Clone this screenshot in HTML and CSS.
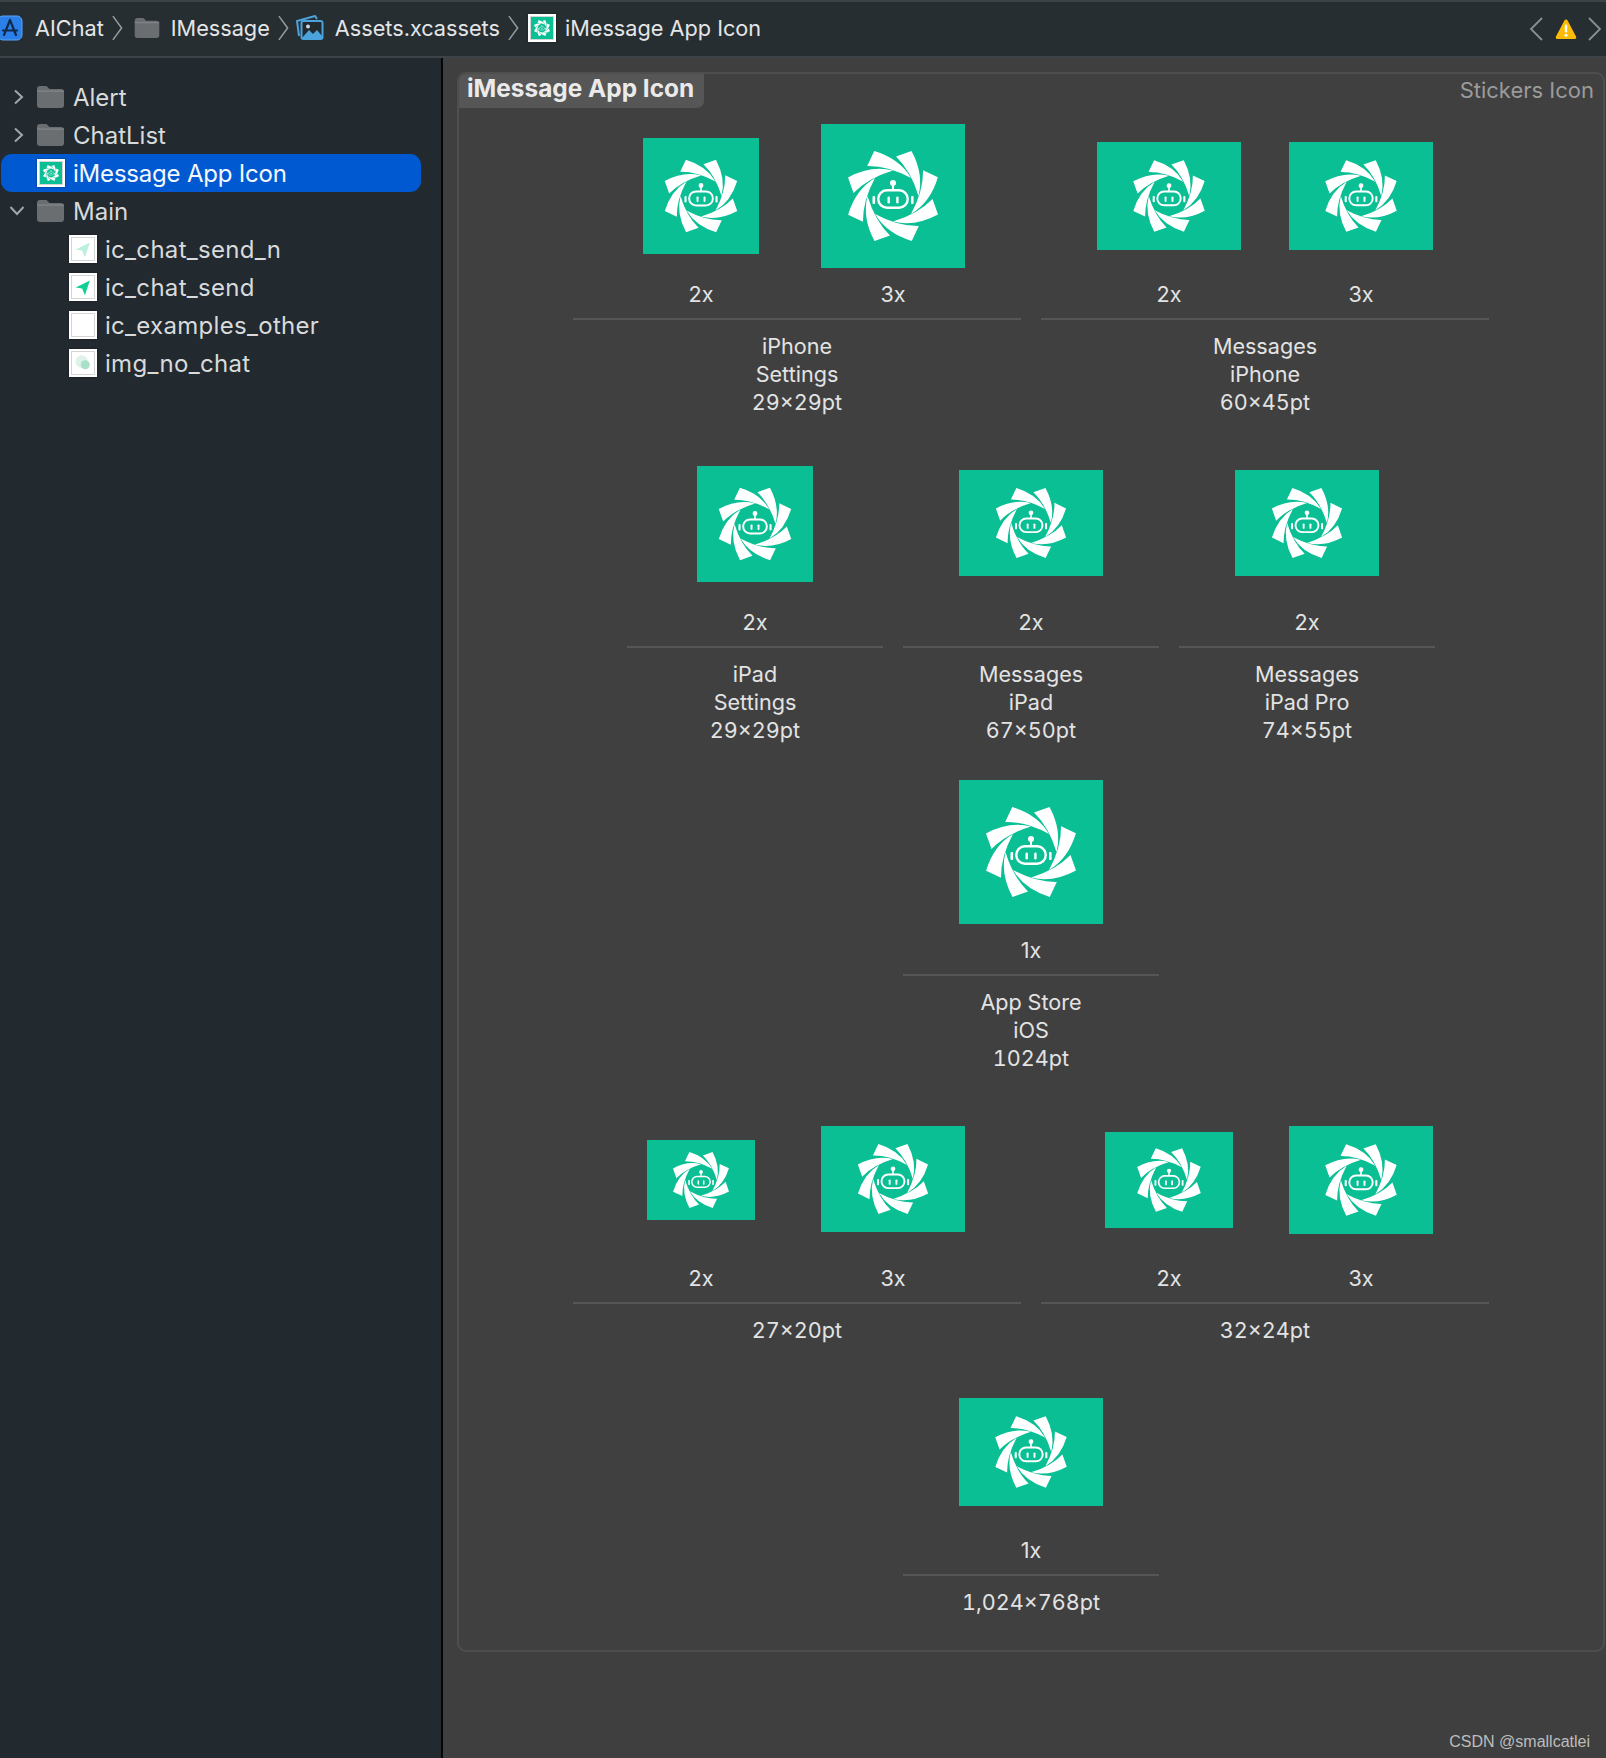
FILE: index.html
```html
<!DOCTYPE html>
<html lang="en">
<head>
<meta charset="utf-8">
<title>iMessage App Icon</title>
<link rel="stylesheet" href="styles.css">
</head>
<body>
<svg class="defs" aria-hidden="true">
  <symbol id="logo" viewBox="-72 -72 144 144">
    <g fill="#fff">
      <path d="M3 -39.5 L18.5 -45 Q31 -22 25.5 0 Q18 -25 3 -39.5Z"/>
      <path transform="rotate(45)" d="M3 -39.5 L18.5 -45 Q31 -22 25.5 0 Q18 -25 3 -39.5Z"/>
      <path transform="rotate(90)" d="M3 -39.5 L18.5 -45 Q31 -22 25.5 0 Q18 -25 3 -39.5Z"/>
      <path transform="rotate(135)" d="M3 -39.5 L18.5 -45 Q31 -22 25.5 0 Q18 -25 3 -39.5Z"/>
      <path transform="rotate(180)" d="M3 -39.5 L18.5 -45 Q31 -22 25.5 0 Q18 -25 3 -39.5Z"/>
      <path transform="rotate(225)" d="M3 -39.5 L18.5 -45 Q31 -22 25.5 0 Q18 -25 3 -39.5Z"/>
      <path transform="rotate(270)" d="M3 -39.5 L18.5 -45 Q31 -22 25.5 0 Q18 -25 3 -39.5Z"/>
      <path transform="rotate(315)" d="M3 -39.5 L18.5 -45 Q31 -22 25.5 0 Q18 -25 3 -39.5Z"/>
      <circle cx="0" cy="-13" r="3"/>
      <rect x="-1" y="-12" width="2" height="6"/>
      <rect x="-20.5" y="0" width="2.6" height="8" rx="1"/>
      <rect x="18" y="0" width="2.6" height="8" rx="1"/>
      <rect x="-5.5" y="0.5" width="2.4" height="7" rx="1.2"/>
      <rect x="3.2" y="0.5" width="2.4" height="7" rx="1.2"/>
    </g>
    <rect x="-14.7" y="-5.7" width="29.4" height="17.4" rx="8.5" fill="none" stroke="#fff" stroke-width="2.4"/>
  </symbol>
  <symbol id="folder" viewBox="0 0 27 22">
    <path d="M0 3a3 3 0 0 1 3-3h6.5l3 3H24a3 3 0 0 1 3 3v13a3 3 0 0 1-3 3H3a3 3 0 0 1-3-3Z" fill="#6b6e70"/>
    <rect x="0" y="4.5" width="27" height="1.2" fill="#84878a"/>
  </symbol>
  <symbol id="send" viewBox="0 0 24 24">
    <path d="M21 2 L1 12 L10 13.5 L14 23Z"/>
  </symbol>
</svg>

<header class="topbar">
  <nav class="crumbs">
    <svg class="app-icon" viewBox="0 0 26 26"><rect x="1" y="1" width="24" height="24" rx="5" fill="#2b7fe8" stroke="#58a5f5"/><path d="M13 5 L7 20 M13 5 L19 20 M6 15.5 H20" stroke="#10284a" stroke-width="2.2" fill="none" stroke-linecap="round"/></svg>
    <span class="crumb first">AIChat</span>
    <svg class="sep" viewBox="0 0 12 28"><path d="M1 1 L10.5 14 L1 27" fill="none" stroke="#9a9da0" stroke-width="1.6"/></svg>
    <svg class="crumb-folder"><use href="#folder"/></svg>
    <span class="crumb">IMessage</span>
    <svg class="sep" viewBox="0 0 12 28"><path d="M1 1 L10.5 14 L1 27" fill="none" stroke="#9a9da0" stroke-width="1.6"/></svg>
    <svg class="assets" viewBox="0 0 28 26"><path d="M3 21 L1 6 L19 1 L21 4" fill="none" stroke="#4aa3dc" stroke-width="2"/><rect x="5.5" y="6" width="21" height="18" rx="2" fill="#22292f" stroke="#4aa3dc" stroke-width="2"/><path d="M6 23 L13 15 L17 19 L21 15 L26 21 V24 H6Z" fill="#4aa3dc"/><circle cx="12" cy="11.5" r="2" fill="#cfd8de"/></svg>
    <span class="crumb">Assets.xcassets</span>
    <svg class="sep" viewBox="0 0 12 28"><path d="M1 1 L10.5 14 L1 27" fill="none" stroke="#9a9da0" stroke-width="1.6"/></svg>
    <span class="thumb crumb-thumb"><span class="thumb-in green"><svg class="mini"><use href="#logo"/></svg></span></span>
    <span class="crumb last">iMessage App Icon</span>
  </nav>
  <div class="nav-right">
    <svg class="arrow" viewBox="0 0 14 24"><path d="M13 1 L2 12 L13 23" fill="none" stroke="#8b8f92" stroke-width="1.8"/></svg>
    <svg class="warn" viewBox="0 0 22 22"><path d="M11 1.5 Q12 1.5 12.6 2.6 L21 18.5 Q21.8 21 19.5 21 H2.5 Q0.2 21 1 18.5 L9.4 2.6 Q10 1.5 11 1.5Z" fill="#fdbb05"/><rect x="9.8" y="6.5" width="2.4" height="8" rx="1.2" fill="#fff"/><circle cx="11" cy="17.3" r="1.5" fill="#fff"/></svg>
    <svg class="arrow" viewBox="0 0 14 24"><path d="M1 1 L12 12 L1 23" fill="none" stroke="#8b8f92" stroke-width="1.8"/></svg>
  </div>
</header>

<div class="body">
  <aside class="sidebar">
    <div class="row"><svg class="disc" viewBox="0 0 12 16"><path d="M2 1.5 L9 8 L2 14.5" fill="none" stroke="#a4a7a9" stroke-width="2"/></svg><svg class="folder"><use href="#folder"/></svg><span>Alert</span></div>
    <div class="row"><svg class="disc" viewBox="0 0 12 16"><path d="M2 1.5 L9 8 L2 14.5" fill="none" stroke="#a4a7a9" stroke-width="2"/></svg><svg class="folder"><use href="#folder"/></svg><span>ChatList</span></div>
    <div class="row selected"><span class="thumb"><span class="thumb-in green"><svg class="mini"><use href="#logo"/></svg></span></span><span>iMessage App Icon</span></div>
    <div class="row"><svg class="disc down" viewBox="0 0 16 12"><path d="M1.5 2 L8 9 L14.5 2" fill="none" stroke="#a4a7a9" stroke-width="2"/></svg><svg class="folder"><use href="#folder"/></svg><span>Main</span></div>
    <div class="row child"><span class="thumb"><span class="thumb-in"><svg class="send pale"><use href="#send"/></svg></span></span><span>ic_chat_send_n</span></div>
    <div class="row child"><span class="thumb"><span class="thumb-in"><svg class="send"><use href="#send"/></svg></span></span><span>ic_chat_send</span></div>
    <div class="row child"><span class="thumb"><span class="thumb-in"></span></span><span>ic_examples_other</span></div>
    <div class="row child"><span class="thumb"><span class="thumb-in"><svg class="chat" viewBox="0 0 20 20"><circle cx="8.5" cy="8.5" r="7" fill="#dff3ea"/><circle cx="12.5" cy="12" r="5" fill="#a8e0c8"/></svg></span></span><span>img_no_chat</span></div>
  </aside>

  <main class="main">
    <section class="panel">
      <div class="panel-head">
        <h1 class="tab">iMessage App Icon</h1>
        <span class="kind">Stickers Icon</span>
      </div>

      <div class="set-row">
        <div class="group g448">
          <div class="slots">
            <div class="slot"><div class="img-box"><div class="tile s116"><svg class="logo"><use href="#logo"/></svg></div></div><div class="scale">2x</div></div>
            <div class="slot"><div class="img-box"><div class="tile s144"><svg class="logo"><use href="#logo"/></svg></div></div><div class="scale">3x</div></div>
          </div>
          <div class="caption"><div>iPhone</div><div>Settings</div><div>29×29pt</div></div>
        </div>
        <div class="group g448">
          <div class="slots">
            <div class="slot"><div class="img-box"><div class="tile w144"><svg class="logo big"><use href="#logo"/></svg></div></div><div class="scale">2x</div></div>
            <div class="slot"><div class="img-box"><div class="tile w144"><svg class="logo big"><use href="#logo"/></svg></div></div><div class="scale">3x</div></div>
          </div>
          <div class="caption"><div>Messages</div><div>iPhone</div><div>60×45pt</div></div>
        </div>
      </div>

      <div class="set-row">
        <div class="group g256">
          <div class="slots"><div class="slot"><div class="img-box"><div class="tile s116"><svg class="logo"><use href="#logo"/></svg></div></div><div class="scale">2x</div></div></div>
          <div class="caption"><div>iPad</div><div>Settings</div><div>29×29pt</div></div>
        </div>
        <div class="group g256">
          <div class="slots"><div class="slot"><div class="img-box"><div class="tile w144 short"><svg class="logo big"><use href="#logo"/></svg></div></div><div class="scale">2x</div></div></div>
          <div class="caption"><div>Messages</div><div>iPad</div><div>67×50pt</div></div>
        </div>
        <div class="group g256">
          <div class="slots"><div class="slot"><div class="img-box"><div class="tile w144 short"><svg class="logo big"><use href="#logo"/></svg></div></div><div class="scale">2x</div></div></div>
          <div class="caption"><div>Messages</div><div>iPad Pro</div><div>74×55pt</div></div>
        </div>
      </div>

      <div class="set-row">
        <div class="group g256">
          <div class="slots"><div class="slot"><div class="img-box"><div class="tile s144"><svg class="logo"><use href="#logo"/></svg></div></div><div class="scale">1x</div></div></div>
          <div class="caption"><div>App Store</div><div>iOS</div><div>1024pt</div></div>
        </div>
      </div>

      <div class="set-row">
        <div class="group g448">
          <div class="slots">
            <div class="slot"><div class="img-box"><div class="tile w108"><svg class="logo bigger"><use href="#logo"/></svg></div></div><div class="scale">2x</div></div>
            <div class="slot"><div class="img-box"><div class="tile w144 short"><svg class="logo big"><use href="#logo"/></svg></div></div><div class="scale">3x</div></div>
          </div>
          <div class="caption"><div>27×20pt</div></div>
        </div>
        <div class="group g448">
          <div class="slots">
            <div class="slot"><div class="img-box"><div class="tile w128"><svg class="logo big"><use href="#logo"/></svg></div></div><div class="scale">2x</div></div>
            <div class="slot"><div class="img-box"><div class="tile w144"><svg class="logo big"><use href="#logo"/></svg></div></div><div class="scale">3x</div></div>
          </div>
          <div class="caption"><div>32×24pt</div></div>
        </div>
      </div>

      <div class="set-row">
        <div class="group g256">
          <div class="slots"><div class="slot"><div class="img-box"><div class="tile w144"><svg class="logo big"><use href="#logo"/></svg></div></div><div class="scale">1x</div></div></div>
          <div class="caption"><div>1,024×768pt</div></div>
        </div>
      </div>
    </section>
    <footer class="mark">CSDN @smallcatlei</footer>
  </main>
</div>
</body>
</html>
```

FILE: styles.css
```css
* { box-sizing: border-box; }
html, body { margin: 0; padding: 0; }
body {
  width: 1606px;
  height: 1758px;
  overflow: hidden;
  background: #3f3f3f;
  font-family: Inter, "Noto Sans", sans-serif;
  color: #e6e6e6;
  display: flex;
  flex-direction: column;
}
.defs { display: none; }

/* top bar */
.topbar {
  height: 58px;
  flex: none;
  background: #272e32;
  border-top: 2px solid #3d4346;
  border-bottom: 2px solid #3d4346;
  display: flex;
  align-items: center;
  justify-content: space-between;
}
.crumbs { display: flex; align-items: center; padding-bottom: 2px; }
.crumb { font-size: 21.7px; color: #e4e5e6; white-space: nowrap; margin-top: -1px; }
.app-icon { width: 26px; height: 26px; margin-left: -3px; flex: none; }
.crumb.first { margin-left: 12px; }
.sep { width: 11px; height: 28px; flex: none; margin-left: 8px; }
.crumb-folder { width: 26px; height: 20px; flex: none; margin: 0 11px; }
.assets { width: 28px; height: 26px; flex: none; margin: 0 11px 0 7px; }
.crumb-thumb { margin-left: 9px; }
.crumb.last { margin-left: 9px; }
.nav-right { display: flex; align-items: center; padding-right: 4px; }
.arrow { width: 14px; height: 24px; flex: none; }
.warn { width: 22px; height: 22px; flex: none; margin: 0 11px 0 12px; }

/* thumbnails */
.thumb {
  width: 28px;
  height: 28px;
  flex: none;
  background: #fff;
  padding: 2px;
  display: block;
  box-shadow: 0 0 2px rgba(0, 0, 0, .4);
}
.thumb-in {
  width: 100%;
  height: 100%;
  display: flex;
  align-items: center;
  justify-content: center;
  border: 1px solid #d4d6d6;
  background: #fff;
}
.thumb-in.green { background: #0abf94; border-color: #d4d6d6; }
.mini { width: 22px; height: 22px; transform: scale(1.15); }
.send { width: 17px; height: 17px; fill: #12cf95; }
.send.pale { fill: #bcefdc; }
.chat { width: 18px; height: 18px; }

/* layout */
.body { flex: 1; display: flex; min-height: 0; }
.sidebar {
  width: 443px;
  flex: none;
  background: #22292f;
  border-right: 2px solid #060606;
  padding-top: 20px;
}
.row {
  height: 38px;
  margin: 0 20px 0 1px;
  border-radius: 11px;
  display: flex;
  align-items: center;
  position: relative;
  padding-left: 36px;
  font-size: 24px;
  color: #d8dadb;
}
.row > span:last-child { margin-left: 8px; white-space: nowrap; }
.row > .folder + span { margin-left: 9px; }
.row.selected { background: #0059d1; color: #f4f8fd; letter-spacing: -.2px; }
.row.child { padding-left: 68px; letter-spacing: .3px; }
.disc { position: absolute; left: 12px; top: 11px; width: 12px; height: 16px; }
.disc.down { left: 8px; top: 13px; width: 16px; height: 12px; }
.folder { width: 27px; height: 22px; flex: none; }

/* main */
.main { flex: 1; min-width: 0; position: relative; padding: 14px 1px 0 14px; }
.panel {
  height: 1580px;
  border: 2px solid #4e4e4e;
  border-radius: 9px;
  background: #404040;
}
.panel-head {
  height: 50px;
  display: flex;
  justify-content: space-between;
  align-items: flex-start;
}
.tab {
  margin: 0;
  height: 34px;
  width: 245px;
  padding-left: 8px;
  background: #565656;
  border-radius: 7px 0 7px 0;
  font-size: 24.4px;
  font-weight: 700;
  line-height: 28px;
  color: #eaeaea;
  white-space: nowrap;
}
.kind { font-size: 22px; color: #9b9b9b; padding: 3px 9px 0 0; }

.set-row { display: flex; justify-content: center; gap: 20px; margin-bottom: 36px; }
.group { display: flex; flex-direction: column; }
.g448 { width: 448px; }
.g256 { width: 256px; }
.slots { display: flex; justify-content: center; border-bottom: 2px solid #565656; }
.slot { width: 192px; display: flex; flex-direction: column; align-items: center; }
.img-box { height: 144px; display: flex; align-items: center; justify-content: center; }
.scale { height: 50px; font-size: 21.6px; line-height: 52px; color: #e3e3e3; }
.caption {
  padding-top: 12px;
  text-align: center;
  font-size: 21.6px;
  line-height: 28px;
  color: #e3e3e3;
  font-feature-settings: "tnum";
}

.tile {
  background: #0abf94;
  display: flex;
  align-items: center;
  justify-content: center;
  overflow: hidden;
  flex: none;
}
.s116 { width: 116px; height: 116px; }
.s144 { width: 144px; height: 144px; }
.w144 { width: 144px; height: 108px; }
.w144.short { height: 106px; margin-bottom: 2px; }
.w128 { width: 128px; height: 96px; }
.w108 { width: 108px; height: 80px; }
.logo { width: 100%; height: 100%; flex: none; }
.logo.big { transform: scale(1.06); }
.logo.bigger { transform: scale(1.12); }

.mark {
  position: absolute;
  right: 16px;
  bottom: 7px;
  font-family: "Liberation Sans", Arial, sans-serif;
  font-size: 16px;
  color: #bdbdbd;
}
```
